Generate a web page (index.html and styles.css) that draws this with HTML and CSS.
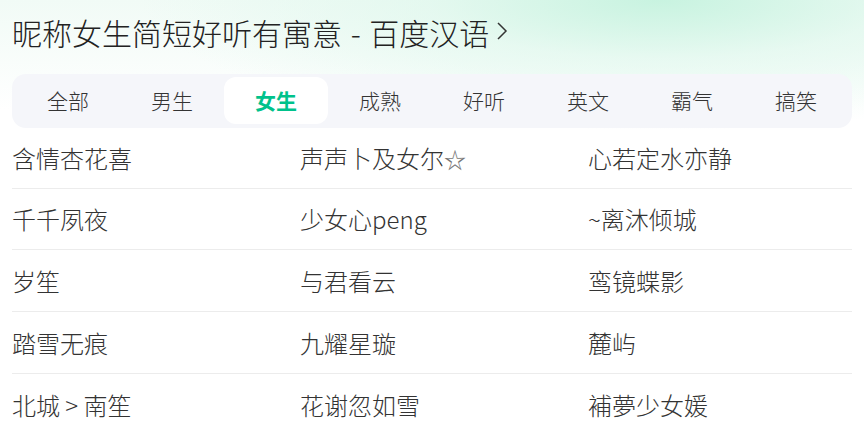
FILE: index.html
```html
<!DOCTYPE html>
<html lang="zh-CN">
<head>
<meta charset="utf-8">
<title>昵称女生简短好听有寓意 - 百度汉语</title>
<link rel="stylesheet" href="styles.css">
</head>
<body>
<div class="page">
  <div class="title">
    <span class="title-text">昵称女生简短好听有寓意 - 百度汉语</span>
    <svg class="chev" width="12" height="20" viewBox="0 0 12 20"><path d="M2 2 L10 10 L2 18" fill="none" stroke="#333" stroke-width="1.5"/></svg>
  </div>
  <div class="tabs">
    <div class="tab">全部</div>
    <div class="tab">男生</div>
    <div class="tab active">女生</div>
    <div class="tab">成熟</div>
    <div class="tab">好听</div>
    <div class="tab">英文</div>
    <div class="tab">霸气</div>
    <div class="tab">搞笑</div>
  </div>
  <div class="list">
    <div class="row"><span>含情杏花喜</span><span>声声卜及女尔<span class="star">☆</span></span><span>心若定水亦静</span></div>
    <div class="row"><span>千千夙夜</span><span>少女心peng</span><span>~离沐倾城</span></div>
    <div class="row"><span>岁笙</span><span>与君看云</span><span>鸾镜蝶影</span></div>
    <div class="row"><span>踏雪无痕</span><span>九耀星璇</span><span>麓屿</span></div>
    <div class="row last"><span>北城 &gt; 南笙</span><span>花谢忽如雪</span><span>補夢少女媛</span></div>
  </div>
</div>
</body>
</html>
```
FILE: styles.css
```css
html, body {
  margin: 0;
  padding: 0;
}
body {
  width: 864px;
  height: 434px;
  overflow: hidden;
  font-family: "Noto Sans CJK SC", "Liberation Sans", sans-serif;
  font-weight: 300;
  color: #333;
  background:
    radial-gradient(ellipse 520px 130px at 660px 0, rgba(200, 243, 224, 1) 0%, rgba(220, 247, 235, 0.6) 45%, rgba(255, 255, 255, 0) 100%),
    linear-gradient(180deg, #f1fbf6 0, #ffffff 110px);
}
.page {
  padding: 0 12px;
}
.title {
  display: flex;
  align-items: center;
  padding-top: 12px;
  height: 40px;
  font-size: 30px;
  line-height: 40px;
  color: #222;
}
.title-text {
  word-spacing: 2px;
}
.chev {
  margin-left: 7px;
  margin-top: -2px;
}
.tabs {
  margin-top: 22px;
  height: 54px;
  box-sizing: border-box;
  padding: 3px 4px 4px;
  background: #f5f6fa;
  border-radius: 14px;
  display: grid;
  grid-template-columns: repeat(8, 104px);
}
.tab {
  height: 47px;
  line-height: 47px;
  text-align: center;
  font-size: 21px;
  color: #333;
  border-radius: 12px;
}
.tab.active {
  background: #fff;
  color: #00c28b;
  font-weight: 700;
}
.list {
  margin-top: -1px;
}
.row {
  display: grid;
  grid-template-columns: 288px 288px 1fr;
  height: 61.67px;
  box-sizing: border-box;
  border-bottom: 1px solid #ececec;
  align-items: center;
  font-size: 24px;
  color: #333;
}
.row.last {
  border-bottom: none;
}
.star {
  color: #777;
  font-family: "DejaVu Sans", sans-serif;
  font-size: 22px;
  font-weight: 300;
}
```
